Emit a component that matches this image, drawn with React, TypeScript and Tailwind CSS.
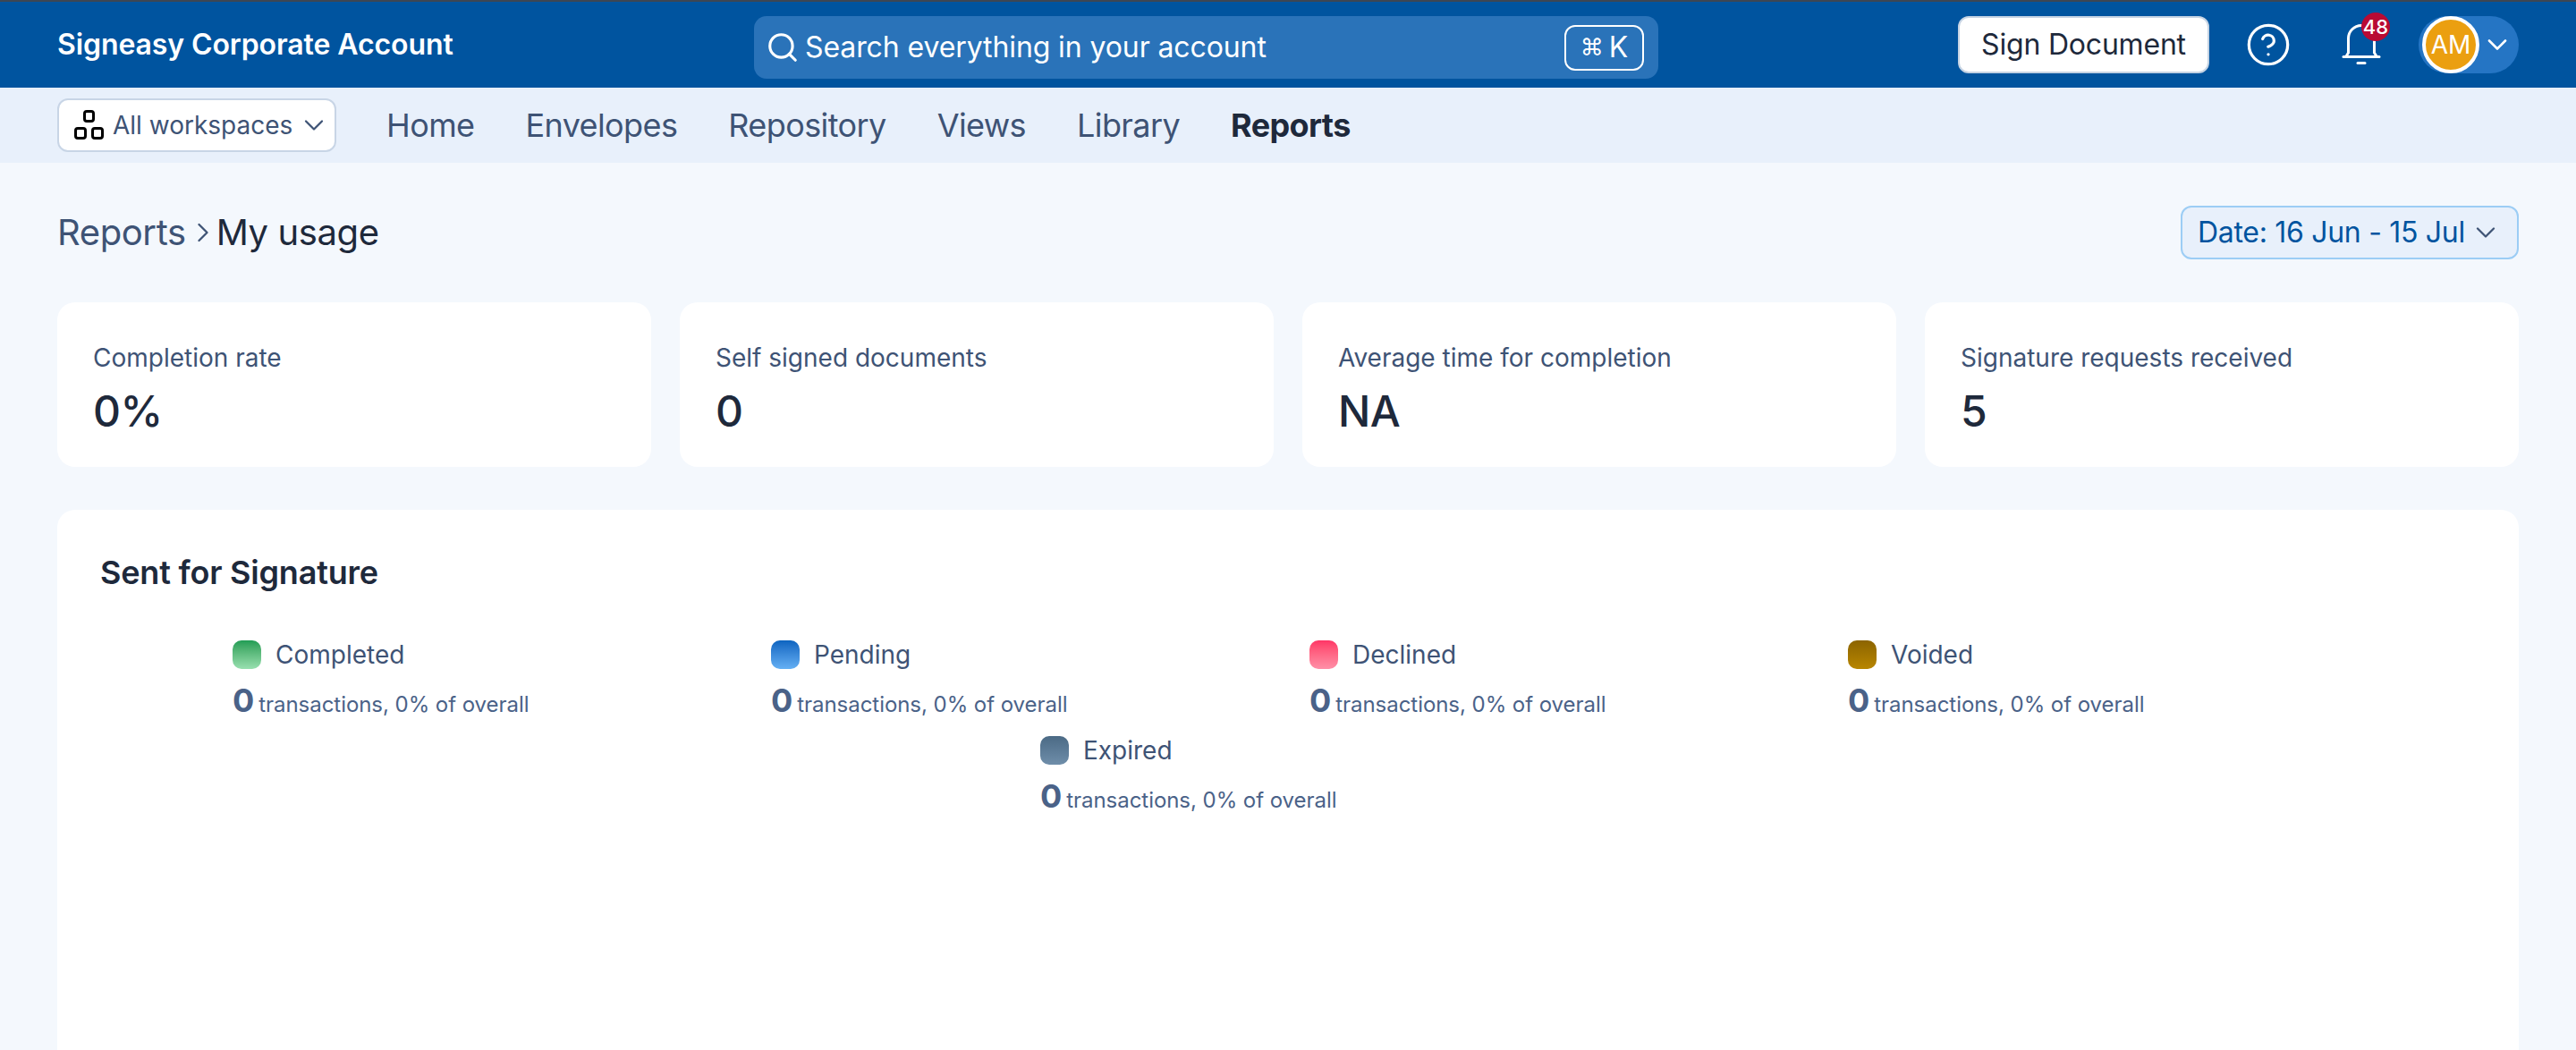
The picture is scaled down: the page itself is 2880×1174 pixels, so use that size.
import React from "react";
import { ChevronDown, ChevronRight, CircleHelp, Search } from "lucide-react";

const font = { fontFamily: "Inter, sans-serif" };

const navItems = ["Home", "Envelopes", "Repository", "Views", "Library"];

const stats = [
  { label: "Completion rate", value: "0%" },
  { label: "Self signed documents", value: "0" },
  { label: "Average time for completion", value: "NA" },
  { label: "Signature requests received", value: "5" },
];

const legend = [
  { label: "Completed", swatch: "from-[#1f9d55] to-[#98e0b0]" },
  { label: "Pending", swatch: "from-[#0a64c0] to-[#64b0f4]" },
  { label: "Declined", swatch: "from-[#ff3366] to-[#ff8fa8]" },
  { label: "Voided", swatch: "from-[#8c6400] to-[#b88600]" },
  { label: "Expired", swatch: "from-[#4b6a85] to-[#6f8eaa]" },
];

function WorkspaceIcon() {
  return (
    <svg width="34" height="34" viewBox="0 0 34 34" fill="none" stroke="#000" strokeWidth="3" className="shrink-0">
      <rect x="11.5" y="1.5" width="10" height="11" rx="2.5" />
      <rect x="1.5" y="20.5" width="11" height="11" rx="2.5" />
      <rect x="20.5" y="20.5" width="11" height="11" rx="2.5" />
    </svg>
  );
}

function BellIcon() {
  return (
    <svg width="44" height="48" viewBox="0 0 44 48" fill="none" stroke="#fff" strokeWidth="3" strokeLinecap="round" strokeLinejoin="round">
      <path d="M2 37.5h40" />
      <path d="M5 37l2.5-4V17a14.5 14.5 0 0 1 29 0v16l2.5 4" />
      <path d="M18 44.5h8" />
    </svg>
  );
}

function Header() {
  return (
    <header className="h-[96px] shrink-0 bg-[#00549f] flex items-center px-[64px]">
      <div className="w-[779px] shrink-0 text-white text-[32px] font-semibold tracking-[-0.1px]">Signeasy Corporate Account</div>
      <div className="w-[1011px] h-[70px] mt-[6px] shrink-0 rounded-[14px] bg-[#2a73b9] flex items-center pl-[13px] pr-[16px] text-white">
        <Search size={38} strokeWidth={2} />
        <span className="ml-[6px] text-[32px] tracking-[-0.1px]">Search everything in your account</span>
        <span className="ml-auto w-[89px] h-[51px] rounded-[12px] border-2 border-white flex items-center justify-center gap-[6px] text-[32px]">
          <span style={{ fontFamily: "DejaVu Sans, sans-serif" }} className="text-[26px]">⌘</span>
          <span>K</span>
        </span>
      </div>
      <button className="ml-auto w-[281px] h-[64px] bg-white rounded-[12px] border-2 border-[#c5d3e3] text-[#1e293b] text-[32px] tracking-[-0.2px]">Sign Document</button>
      <span className="ml-[40px] text-white"><CircleHelp size={52} strokeWidth={1.5} /></span>
      <div className="relative ml-[56px] w-[44px]">
        <BellIcon />
        <span className="absolute left-[22px] top-[-12px] w-[32px] h-[32px] rounded-full bg-[#b90a33] text-white text-[22px] font-medium flex items-center justify-center">48</span>
      </div>
      <div className="ml-[42px] w-[112px] h-[64px] rounded-full bg-[#2575c4] flex items-center pl-[4px] text-white">
        <span className="w-[64px] h-[64px] shrink-0 rounded-full bg-[#eb9f10] border-4 border-white flex items-center justify-center text-[28px]">AM</span>
        <ChevronDown size={36} className="ml-[2px] shrink-0" strokeWidth={1.75} />
      </div>
    </header>
  );
}

function SubNav() {
  return (
    <nav className="h-[84px] shrink-0 bg-[#e8f0fb] flex items-center px-[64px]">
      <button className="w-[312px] h-[60px] shrink-0 rounded-[12px] bg-white border-2 border-[#c8d5e6] flex items-center pl-[17px] text-[#3e5375] text-[28px]">
        <WorkspaceIcon />
        <span className="ml-[9px]">All workspaces</span>
        <ChevronDown size={36} strokeWidth={1.5} className="ml-[6px] shrink-0" />
      </button>
      <div className="ml-[56px] flex gap-[57px] text-[36px] tracking-[-0.6px] text-[#3e5375]">
        {navItems.map((item) => (
          <span key={item}>{item}</span>
        ))}
        <span className="font-bold text-[#1e293b]">Reports</span>
      </div>
    </nav>
  );
}

function StatCard({ label, value }: { label: string; value: string }) {
  return (
    <div className="h-[184px] bg-white rounded-[20px] pl-[40px] pt-[42px]">
      <div className="text-[28px] leading-[40px] text-[#3e5375]">{label}</div>
      <div className="mt-[10px] text-[48px] leading-[60px] font-medium tracking-[-0.5px] text-[#1e293b]">{value}</div>
    </div>
  );
}

function LegendItem({ label, swatch }: { label: string; swatch: string }) {
  return (
    <div className="w-[554px] h-[79px]">
      <div className="flex items-center h-[32px]">
        <span className={`w-[32px] h-[32px] rounded-[10px] bg-gradient-to-b ${swatch}`} />
        <span className="ml-[16px] text-[28px] text-[#3e5375]">{label}</span>
      </div>
      <div className="mt-[17px] flex items-baseline text-[#4a6288]">
        <span className="text-[36px] leading-[36px] font-bold">0</span>
        <span className="ml-[5px] text-[24px] tracking-[-0.05px]">transactions, 0% of overall</span>
      </div>
    </div>
  );
}

export default function App() {
  return (
    <div style={font} className="h-screen overflow-hidden flex flex-col bg-[#f4f8fd]">
      <div className="h-[2px] shrink-0 bg-[#3d4654]" />
      <Header />
      <SubNav />
      <main className="flex-1 min-h-0 flex flex-col px-[64px]">
        <div className="h-[156px] shrink-0 flex items-center justify-between">
          <div className="flex items-center text-[40px] tracking-[-0.4px]">
            <span className="text-[#3e5375]">Reports</span>
            <ChevronRight size={36} strokeWidth={1.5} className="ml-[1px] -mr-[3px] text-[#3e5375]" />
            <span className="text-[#1e293b]">My usage</span>
          </div>
          <button className="w-[378px] h-[60px] rounded-[12px] bg-[#e8f0fb] border-2 border-[#9ccdf5] flex items-center pl-[17px] text-[#00549f] text-[32px] tracking-[-0.3px]">
            Date: 16 Jun - 15 Jul
            <ChevronDown size={36} strokeWidth={1.5} className="ml-[5px] text-[#3e5375]" />
          </button>
        </div>
        <div className="grid grid-cols-4 gap-[32px] shrink-0">
          {stats.map((s) => (
            <StatCard key={s.label} label={s.label} value={s.value} />
          ))}
        </div>
        <section className="mt-[48px] flex-1 bg-white rounded-t-[20px]">
          <h2 className="pl-[48px] pt-[48px] text-[36px] leading-[44px] font-semibold tracking-[-0.2px] text-[#1e293b]">Sent for Signature</h2>
          <div className="mt-[54px] flex flex-wrap justify-center gap-x-[48px] gap-y-[28px]">
            {legend.map((l) => (
              <LegendItem key={l.label} label={l.label} swatch={l.swatch} />
            ))}
          </div>
        </section>
      </main>
    </div>
  );
}
